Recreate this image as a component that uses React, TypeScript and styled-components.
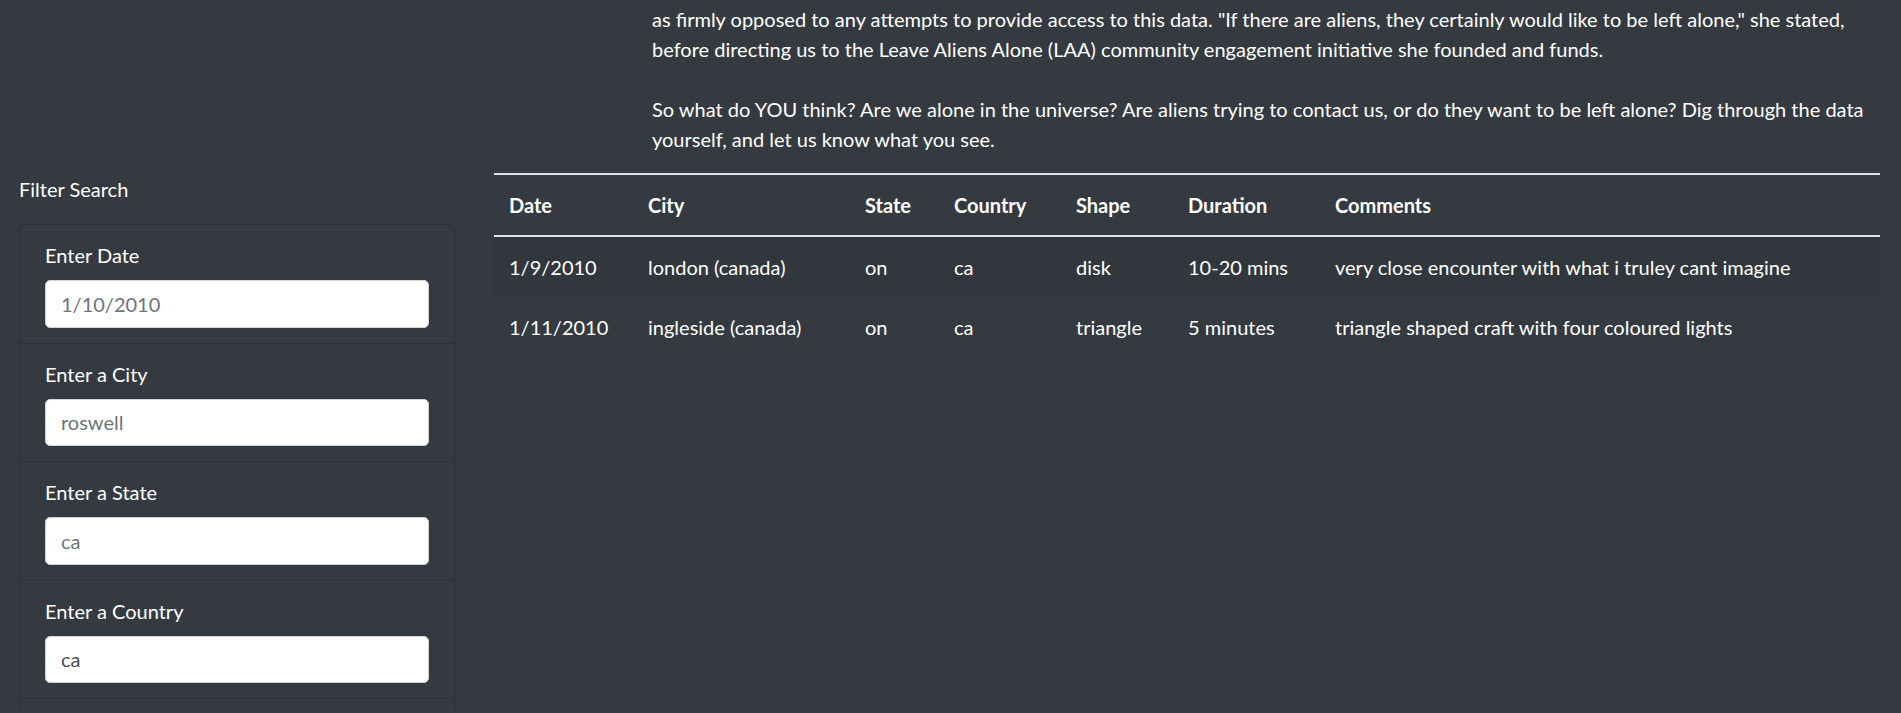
import React from 'react';
import styled, { createGlobalStyle } from 'styled-components';

// --- Global ---
const GlobalStyle = createGlobalStyle`
  html, body { margin: 0; padding: 0; overflow: hidden; background: #343a40; }
  body { font-family: Lato, "Open Sans", sans-serif; font-size: 20px; line-height: 30px; color: #fff; }
  * { box-sizing: border-box; }
`;

// --- Styled Components ---
const Page = styled.div`
  padding: 4px 21px 0 19px; min-height: 713px; background: #343a40;
`;
const Intro = styled.p`
  margin: 0 0 19px 633px; white-space: nowrap; color: #fff;
`;
const MainRow = styled.div`
  display: grid; grid-template-columns: 436px 1fr; column-gap: 39px; align-items: start;
`;
const FilterTitle = styled.div`
  padding-top: 1px; margin-bottom: 20px;
`;
const FilterCard = styled.ul`
  list-style: none; margin: 0; padding: 0;
  border: 1px solid rgba(0,0,0,0.14); border-radius: 5px 5px 0 0;
`;
const FilterItem = styled.li`
  padding: 15px 25px; border-bottom: 1px solid rgba(0,0,0,0.14);
  display: flex; flex-direction: column;
  &:last-child { border-bottom: none; }
`;
const Label = styled.label`
  margin-bottom: 10px;
`;
const Input = styled.input`
  height: 47.5px; width: 100%; padding: 0 15px;
  border: 1px solid #ced4da; border-radius: 5px; background: #fff;
  font-family: inherit; font-size: 20px; color: #495057;
  &::placeholder { color: #6c757d; opacity: 1; }
`;
const Table = styled.table`
  width: 100%; border-collapse: collapse; table-layout: fixed; color: #fff;
`;
const HeadCell = styled.th`
  text-align: left; font-weight: 700; padding: 15px 15px;
  border-top: 2px solid #dee2e6; border-bottom: 2px solid #dee2e6;
  white-space: nowrap;
`;
const Row = styled.tr<{ $striped: boolean }>`
  background: ${({ $striped }) => ($striped ? 'rgba(0,0,0,0.05)' : 'transparent')};
  & + & td { border-top: 1px solid #dee2e6; }
`;
const Cell = styled.td`
  padding: 15px 15px; white-space: nowrap; vertical-align: top;
`;

// --- Data ---
const columns = [
  { key: 'datetime', label: 'Date', width: 139 },
  { key: 'city', label: 'City', width: 217 },
  { key: 'state', label: 'State', width: 89 },
  { key: 'country', label: 'Country', width: 122 },
  { key: 'shape', label: 'Shape', width: 112 },
  { key: 'durationMinutes', label: 'Duration', width: 147 },
  { key: 'comments', label: 'Comments' },
] as const;

interface Sighting {
  datetime: string; city: string; state: string; country: string;
  shape: string; durationMinutes: string; comments: string;
}

const sightings: Sighting[] = [
  { datetime: '1/9/2010', city: 'london (canada)', state: 'on', country: 'ca', shape: 'disk', durationMinutes: '10-20 mins', comments: 'very close encounter with what i truley cant imagine' },
  { datetime: '1/11/2010', city: 'ingleside (canada)', state: 'on', country: 'ca', shape: 'triangle', durationMinutes: '5 minutes', comments: 'triangle shaped craft with four coloured lights' },
];

const filters = [
  { id: 'datetime', label: 'Enter Date', placeholder: '1/10/2010' },
  { id: 'city', label: 'Enter a City', placeholder: 'roswell' },
  { id: 'state', label: 'Enter a State', placeholder: 'ca' },
  { id: 'country', label: 'Enter a Country', placeholder: 'ca', value: 'ca' },
  { id: 'shape', label: 'Enter a Shape', placeholder: 'triangle' },
];

const App = () => {
  return (
    <Page>
      <GlobalStyle />
      <Intro>
        as firmly opposed to any attempts to provide access to this data. "If there are aliens, they certainly would like to be left alone," she stated,<br />
        before directing us to the Leave Aliens Alone (LAA) community engagement initiative she founded and funds.<br />
        <br />
        So what do YOU think? Are we alone in the universe? Are aliens trying to contact us, or do they want to be left alone? Dig through the data<br />
        yourself, and let us know what you see.
      </Intro>

      <MainRow>
        <div>
          <FilterTitle>Filter Search</FilterTitle>
          <FilterCard>
            {filters.map(f => (
              <FilterItem key={f.id}>
                <Label htmlFor={f.id}>{f.label}</Label>
                <Input id={f.id} type="text" placeholder={f.placeholder} defaultValue={f.value} />
              </FilterItem>
            ))}
          </FilterCard>
        </div>

        <Table>
          <colgroup>
            {columns.map(c => (
              <col key={c.key} style={'width' in c ? { width: c.width } : undefined} />
            ))}
          </colgroup>
          <thead>
            <tr>
              {columns.map(c => <HeadCell key={c.key}>{c.label}</HeadCell>)}
            </tr>
          </thead>
          <tbody>
            {sightings.map((s, i) => (
              <Row key={i} $striped={i % 2 === 0}>
                {columns.map(c => <Cell key={c.key}>{s[c.key]}</Cell>)}
              </Row>
            ))}
          </tbody>
        </Table>
      </MainRow>
    </Page>
  );
};

export default App;
